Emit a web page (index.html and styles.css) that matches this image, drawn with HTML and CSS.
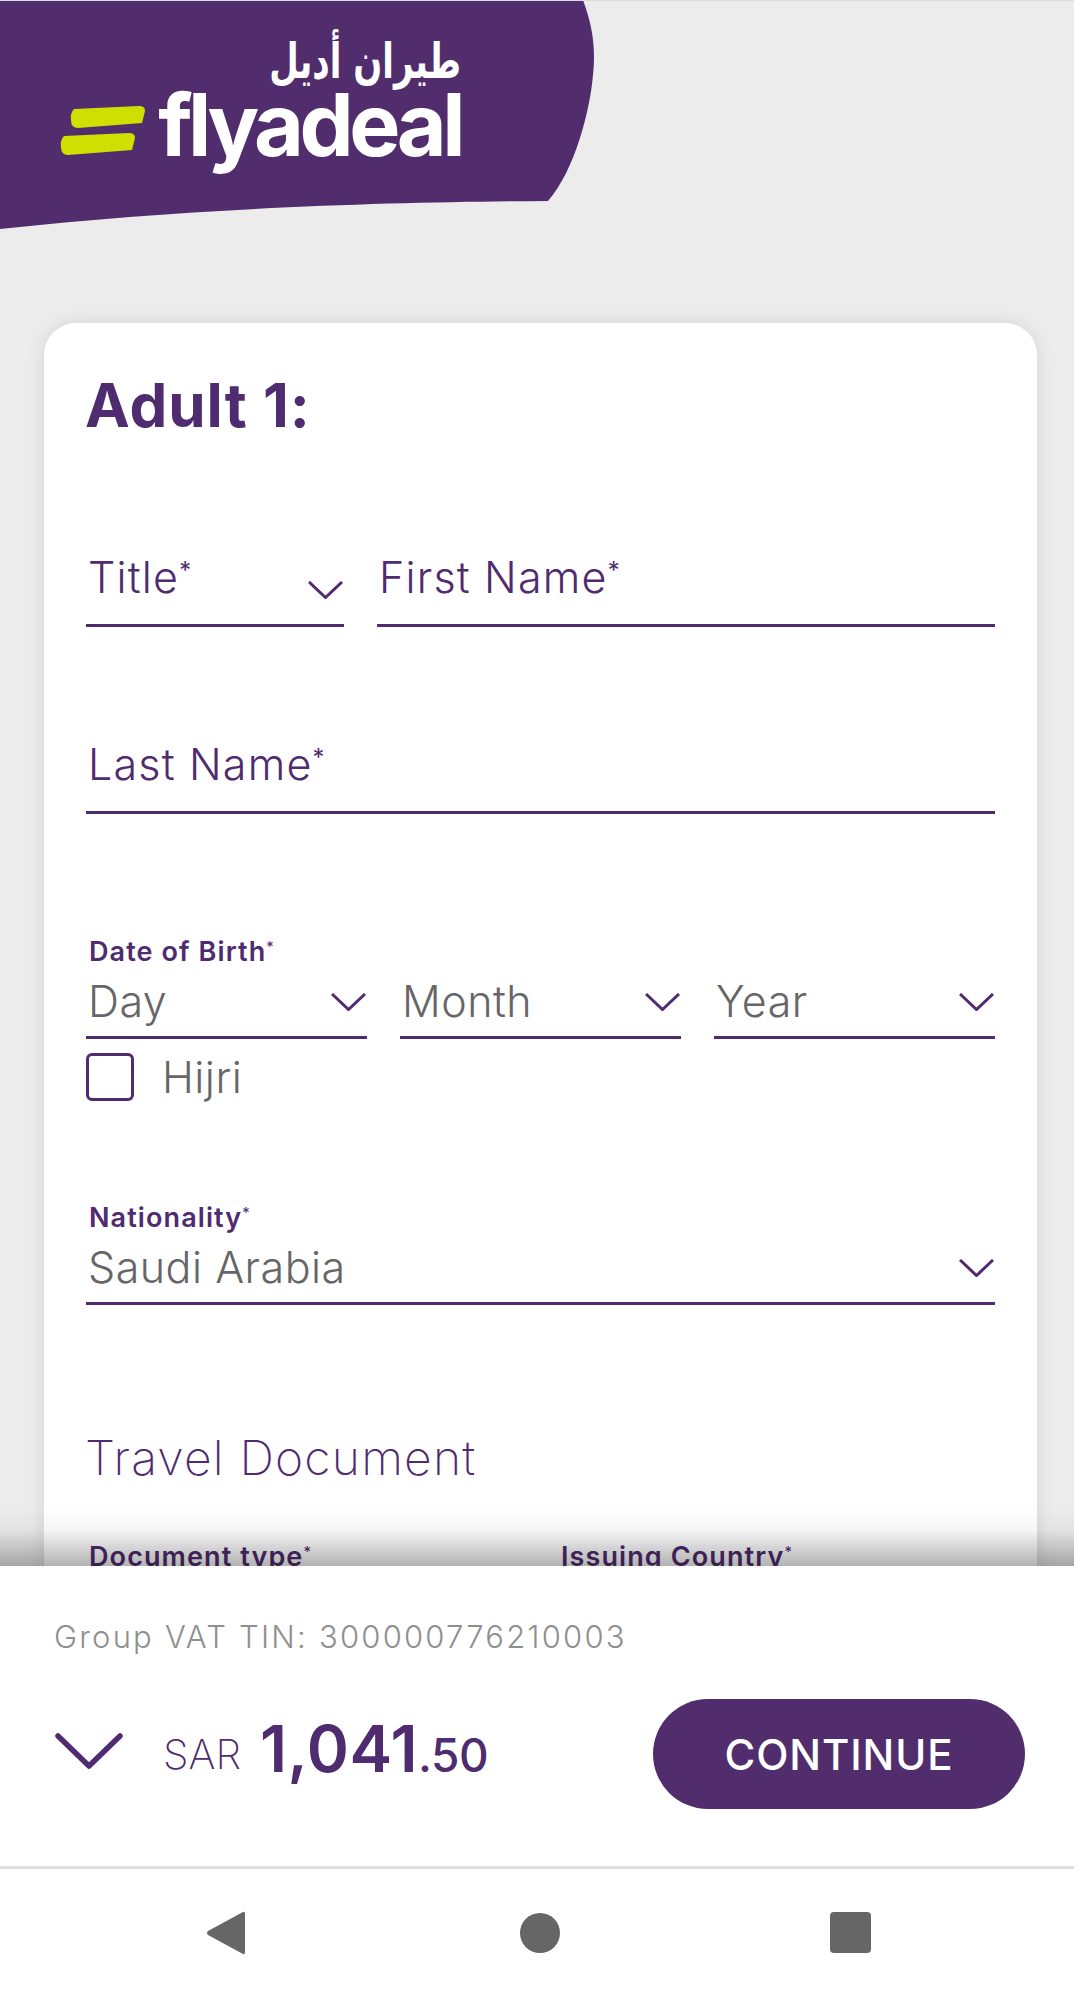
FILE: index.html
```html
<!DOCTYPE html>
<html lang="en">
<head>
<meta charset="utf-8">
<title>flyadeal</title>
<link rel="stylesheet" href="styles.css">
</head>
<body>
<div class="app">
  <main class="scroll">
    <header class="hero">
      <svg class="hero-shape" viewBox="0 0 600 230" width="600" height="230" aria-hidden="true"><path d="M0 0H583C592 25 596 45 593 75C590 110 575 170 548 201C400 202 200 207 0 229Z"/></svg>
      <svg class="logo-bars" viewBox="0 0 90 52" width="90" height="52" aria-hidden="true"><path d="M14 3L79 0Q85 0 85 5L82 17L18 22Q11 22 11 14Q10 7 14 3Z"/><path d="M4 30L69 27Q75 27 75 32L72 44L8 49Q1 49 1 41Q0 34 4 30Z"/></svg>
      <div class="brand">
        <div class="brand-ar" lang="ar" dir="rtl">طيران أديل</div>
        <div class="brand-en">flyadeal</div>
      </div>
    </header>
    <section class="card">
      <h1 class="adult">Adult 1:</h1>
      <div class="row row-name">
        <div class="field field-title"><span class="ph">Title<sup>*</sup></span><svg class="chev chev-low" viewBox="0 0 35 18"><polyline points="1,1 17.5,16.5 34,1"/></svg></div>
        <div class="field grow"><span class="ph">First Name<sup>*</sup></span></div>
      </div>
      <div class="field field-last"><span class="ph">Last Name<sup>*</sup></span></div>

      <div class="label label-dob">Date of Birth<sup>*</sup></div>
      <div class="row row-dob">
        <div class="select grow"><span class="val">Day</span><svg class="chev" viewBox="0 0 35 18"><polyline points="1,1 17.5,16.5 34,1"/></svg></div>
        <div class="select grow"><span class="val">Month</span><svg class="chev" viewBox="0 0 35 18"><polyline points="1,1 17.5,16.5 34,1"/></svg></div>
        <div class="select grow"><span class="val">Year</span><svg class="chev" viewBox="0 0 35 18"><polyline points="1,1 17.5,16.5 34,1"/></svg></div>
      </div>
      <div class="check"><span class="box"></span><span class="val">Hijri</span></div>

      <div class="label label-nat">Nationality<sup>*</sup></div>
      <div class="select select-nat"><span class="val">Saudi Arabia</span><svg class="chev" viewBox="0 0 35 18"><polyline points="1,1 17.5,16.5 34,1"/></svg></div>

      <h2 class="doc-title">Travel Document</h2>
      <div class="doc-row">
        <div class="label">Document type<sup>*</sup></div>
        <div class="label">Issuing Country<sup>*</sup></div>
      </div>
    </section>
  </main>
  <footer class="bar">
    <div class="vat">Group VAT TIN: 300000776210003</div>
    <div class="bar-row">
      <div class="total">
        <svg class="chev-big" viewBox="0 0 68 36"><polyline points="3,3 34,33 65,3"/></svg>
        <div class="price"><span class="cur">SAR</span><span class="int">1,041</span><span class="dec">.50</span></div>
      </div>
      <button class="continue">CONTINUE</button>
    </div>
  </footer>
  <nav class="sysnav">
    <svg class="nav-back" viewBox="0 0 38 44" width="38" height="44"><path d="M36 1Q38 0 38 3V41Q38 44 36 43L1 24Q-1 22 1 20Z"/></svg>
    <svg class="nav-home" viewBox="0 0 40 40" width="40" height="40"><circle cx="20" cy="20" r="20"/></svg>
    <svg viewBox="0 0 41 41" width="41" height="41"><rect width="41" height="41" rx="4"/></svg>
  </nav>
</div>
</body>
</html>
```

FILE: styles.css
```css
* { box-sizing: border-box; }
html, body { margin: 0; padding: 0; }
body { font-family: "Inter", "Liberation Sans", sans-serif; background: #ececec; color: #4f2b6f; }
.app { width: 1074px; height: 1996px; display: flex; flex-direction: column; overflow: hidden; }
.scroll { position: relative; height: 1566px; overflow: hidden; background: #ececec; border-top: 1px solid #dcdcdc; }
.scroll::after { content: ""; position: absolute; left: 0; right: 0; bottom: 0; height: 60px; background: linear-gradient(rgba(0,0,0,0), rgba(0,0,0,.04) 40%, rgba(0,0,0,.3)); }

.hero { position: relative; height: 322px; }
.hero-shape { position: absolute; left: 0; top: -1px; fill: #522d6d; }
.logo-bars { position: absolute; left: 60px; top: 105px; fill: #cfdf00; }
.brand { position: absolute; right: 613px; top: 42px; display: flex; flex-direction: column; align-items: flex-end; color: #fff; }
.brand-ar { font-family: "DejaVu Sans", sans-serif; font-weight: 700; font-size: 34px; line-height: 50px; transform: translateY(4px) scaleY(1.45); transform-origin: bottom right; }
.brand-en { font-weight: 700; font-size: 86px; line-height: 90px; letter-spacing: -4.5px; margin-top: -13px; }

.card { width: 993px; margin-left: 44px; height: 1400px; background: #fff; border-radius: 32px; padding: 47px 42px 0; box-shadow: 0 0 18px rgba(0,0,0,.1); }
.adult { margin: 0 0 0 -1px; font-size: 60px; line-height: 70px; font-weight: 700; color: #4f2b6f; letter-spacing: 1px; }

.row { display: flex; gap: 33px; }
.grow { flex: 1 1 0; }
.row-name { margin-top: 111px; }
.field { display: flex; justify-content: space-between; align-items: flex-start; height: 76px; padding: 0 1px 23px 2px; border-bottom: 3px solid #4f2b6f; }
.field-title { width: 258px; }
.field-last { margin-top: 111px; }
.ph { font-size: 43px; line-height: 52px; font-weight: 300; color: #4f2b6f; letter-spacing: 1.2px; }
sup { font-size: .55em; line-height: 0; vertical-align: baseline; position: relative; top: -.6em; font-weight: 400; }
.chev { width: 35px; height: 18px; flex: none; margin-top: 19px; fill: none; stroke: #4f2b6f; stroke-width: 3; }
.chev-low { margin-top: 30px; }

.label { font-size: 27px; line-height: 34px; font-weight: 600; color: #4f2b6f; padding-left: 3px; letter-spacing: 1.1px; }
.label-dob { margin-top: 121px; }
.label-nat { margin-top: 100px; }
.row-dob { margin-top: 5px; }
.select { display: flex; justify-content: space-between; align-items: flex-start; height: 65px; padding: 0 1px 12px 2px; border-bottom: 3px solid #4f2b6f; }
.select-nat { margin-top: 5px; }
.val { font-size: 43px; line-height: 54px; font-weight: 300; color: #666; letter-spacing: .5px; }

.check { display: flex; gap: 28px; align-items: center; height: 48px; margin-top: 14px; }
.box { width: 48px; height: 48px; border: 3px solid #4f2b6f; border-radius: 6px; }
.doc-title { margin: 123px 0 0 -1px; font-size: 48px; line-height: 60px; font-weight: 200; color: #4f2b6f; letter-spacing: 1.2px; }
.doc-row { display: grid; grid-template-columns: 472px 1fr; margin-top: 52px; }

.bar { height: 300px; background: #fff; padding: 52px 49px 0 55px; position: relative; }
.vat { font-size: 31px; line-height: 38px; font-weight: 300; color: #8f8f8f; letter-spacing: 2.2px; margin-left: -1px; }
.bar-row { display: flex; justify-content: space-between; align-items: center; margin-top: 43px; }
.total { display: flex; align-items: center; gap: 40px; }
.chev-big { width: 68px; height: 36px; margin-top: -6px; fill: none; stroke: #4f2b6f; stroke-width: 5.5; stroke-linecap: round; stroke-linejoin: round; }
.price { display: flex; align-items: baseline; color: #4f2b6f; margin-top: -11px; }
.cur { font-size: 41px; font-weight: 200; margin-right: 19px; transform: translateY(-3px); }
.int { font-size: 64px; font-weight: 600; letter-spacing: .5px; }
.dec { font-size: 46px; font-weight: 500; letter-spacing: -.5px; }
.continue { width: 372px; height: 110px; border: 0; border-radius: 55px; background: #522d6d; color: #fff; font-family: inherit; font-size: 42px; font-weight: 500; letter-spacing: .9px; padding: 0; }

.sysnav { height: 130px; background: #fff; border-top: 3px solid #e0e0e0; display: flex; align-items: center; padding-left: 207px; fill: #666; }
.nav-back { margin-right: 275px; }
.nav-home { margin-right: 270px; }
```
